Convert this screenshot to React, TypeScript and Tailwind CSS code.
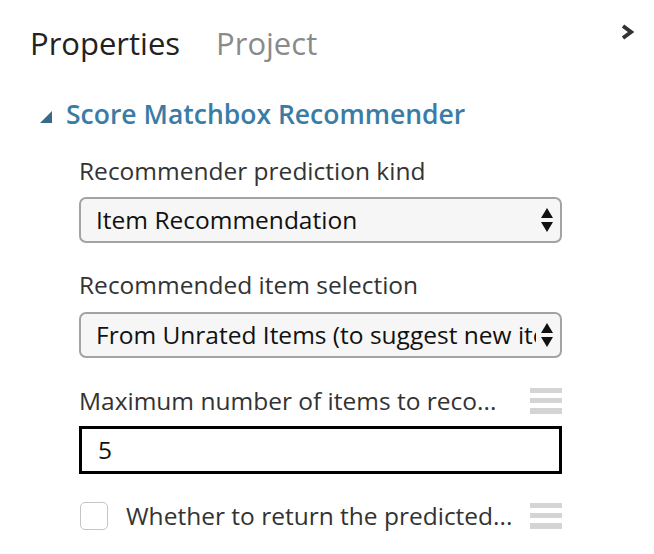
import React from "react"

function Hamburger() {
  return (
    <div className="flex w-[32px] flex-col gap-[5px]">
      <div className="h-[5px] bg-[#d4d4d4]" />
      <div className="h-[5px] bg-[#d4d4d4]" />
      <div className="h-[6px] bg-[#d4d4d4]" />
    </div>
  )
}

function SelectArrows() {
  return (
    <svg width="12" height="24" viewBox="0 0 12 24" className="shrink-0">
      <path d="M6 0 L12 10 L0 10 Z" fill="#111" />
      <path d="M6 24 L12 14 L0 14 Z" fill="#111" />
    </svg>
  )
}

function Select({ value }: { value: string }) {
  return (
    <div className="flex h-[46px] w-[483px] items-center rounded-[7px] border-2 border-[#a3a3a3] bg-[#f6f6f6] pl-[15px] pr-[7px]">
      <span className="mr-[5px] flex-1 overflow-hidden whitespace-nowrap text-[24.5px] leading-[36px] text-[#111]">
        {value}
      </span>
      <SelectArrows />
    </div>
  )
}

export default function App() {
  return (
    <div className="h-[554px] w-[654px] overflow-hidden bg-white font-['Open_Sans',sans-serif] text-[#333]">
      {/* tabs */}
      <div className="flex items-start pl-[30px] pr-[20px] pt-[23px]">
        <div className="flex gap-[36px] text-[31px] leading-[40px]">
          <span className="text-[#222]">Properties</span>
          <span className="text-[#8a8a8a]">Project</span>
        </div>
        <svg width="14" height="16" viewBox="0 0 14 16" className="ml-auto mt-[1px]">
          <path d="M3 2 L11 8 L3 14" fill="none" stroke="#333" strokeWidth="4" strokeLinejoin="miter" />
        </svg>
      </div>

      {/* section header */}
      <div className="mt-[35px] flex items-center pl-[40px]">
        <svg width="12" height="12" viewBox="0 0 12 12" className="mt-[6px]">
          <path d="M12 0 L12 12 L0 12 Z" fill="#3b6a88" />
        </svg>
        <span className="ml-[14px] text-[26.5px] font-semibold leading-[32px] text-[#3a7ca5]">
          Score Matchbox Recommender
        </span>
      </div>

      <div className="pl-[79px]">
        <div className="mt-[27px] text-[24.5px] leading-[28px]">Recommender prediction kind</div>
        <div className="mt-[12px]">
          <Select value="Item Recommendation" />
        </div>

        <div className="mt-[28px] text-[24.5px] leading-[28px]">Recommended item selection</div>
        <div className="mt-[13px]">
          <Select value="From Unrated Items (to suggest new items)" />
        </div>

        <div className="mt-[29px] flex w-[483px] items-center justify-between">
          <span className="text-[24.5px] leading-[28px]">Maximum number of items to reco...</span>
          <Hamburger />
        </div>
        <div className="mt-[11px] flex h-[48px] w-[483px] items-center border-[3px] border-black pl-[16px] text-[24.5px] text-[#111]">
          5
        </div>

        <div className="mt-[28px] flex w-[483px] items-center">
          <div className="ml-[1px] h-[28px] w-[28px] shrink-0 rounded-[5px] border border-[#c4c4c4] bg-white" />
          <span className="ml-[18px] flex-1 whitespace-nowrap text-[24.5px] leading-[28px]">
            Whether to return the predicted...
          </span>
          <Hamburger />
        </div>
      </div>
    </div>
  )
}
